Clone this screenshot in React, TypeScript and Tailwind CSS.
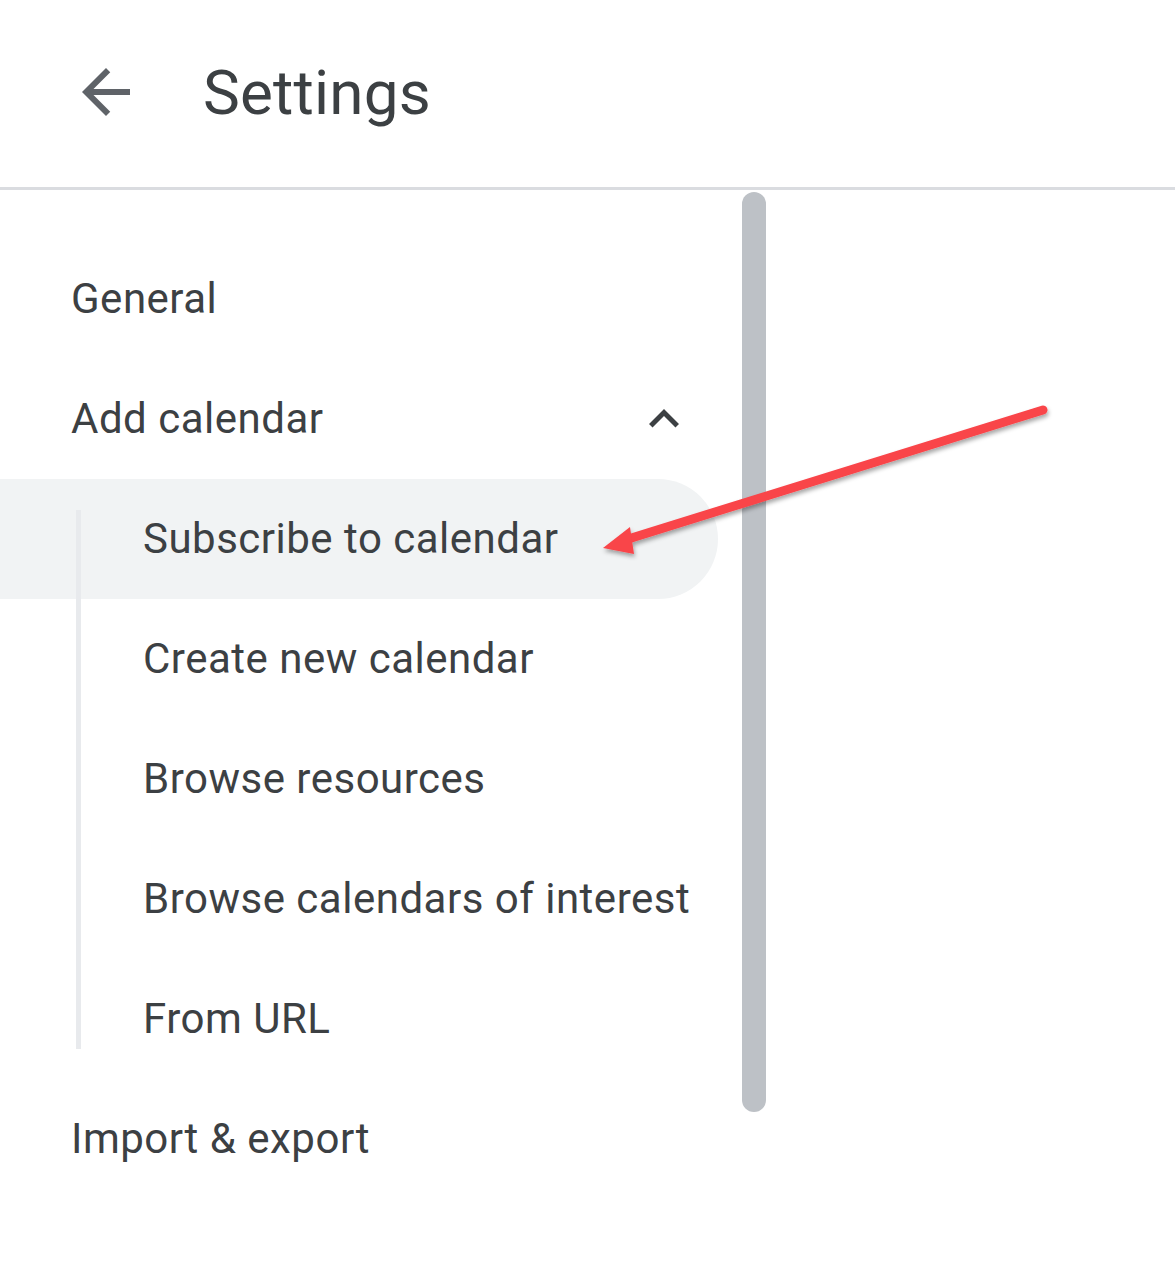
import React from "react";

const items = [
  "Subscribe to calendar",
  "Create new calendar",
  "Browse resources",
  "Browse calendars of interest",
  "From URL",
];

export default function App() {
  return (
    <div className="relative w-[1175px] h-[1268px] bg-white text-[#3c4043] font-['Roboto',sans-serif] overflow-hidden">
      <header className="h-[190px] border-b-[3px] border-[#dadce0] flex items-center">
        <svg className="ml-[70px] mt-[-4px]" width="72" height="72" viewBox="0 0 24 24" fill="#5f6368">
          <path d="M20 11H7.83l5.59-5.59L12 4l-8 8 8 8 1.41-1.41L7.83 13H20v-2z" />
        </svg>
        <h1 className="ml-[61px] mt-[-2px] text-[62px] font-normal leading-none tracking-[0.2px]">Settings</h1>
      </header>
      <div className="flex">
        <nav className="w-[742px] pt-[49px] text-[42px] leading-none tracking-[0.5px]">
          <div className="h-[120px] flex items-center pl-[71px]">General</div>
          <div className="h-[120px] flex items-center pl-[71px] pr-[48px] justify-between">
            <span>Add calendar</span>
            <svg width="60" height="60" viewBox="0 0 24 24" fill="#3c4043">
              <path d="M12 8l-6 6 1.41 1.41L12 10.83l4.59 4.58L18 14z" />
            </svg>
          </div>
          <div className="relative">
            {items.map((t, i) => (
              <div
                key={t}
                className={
                  i === 0
                    ? "h-[120px] w-[718px] flex items-center pl-[143px] bg-[#f1f3f4] rounded-r-[60px]"
                    : "h-[120px] w-[718px] flex items-center pl-[143px]"
                }
              >
                {t}
              </div>
            ))}
            <div className="absolute left-[76px] top-[31px] bottom-[30px] w-[5px] bg-[#e8eaed]" />
          </div>
          <div className="h-[120px] flex items-center pl-[71px]">Import &amp; export</div>
        </nav>
        <div className="mt-[2px] w-[24px] h-[920px] rounded-full bg-[#bdc1c6]" />
      </div>
      <svg className="absolute left-0 top-0 pointer-events-none" width="1175" height="1268" viewBox="0 0 1175 1268">
        <defs>
          <filter id="sh" x="-10%" y="-50%" width="120%" height="200%">
            <feDropShadow dx="1" dy="3" stdDeviation="2" floodColor="#000" floodOpacity="0.35" />
          </filter>
        </defs>
        <g filter="url(#sh)">
          <line x1="1043" y1="410" x2="625" y2="540" stroke="#f94449" strokeWidth="9" strokeLinecap="round" />
          <polygon points="603,548 630,527 634,554" fill="#f94449" />
        </g>
      </svg>
    </div>
  );
}
